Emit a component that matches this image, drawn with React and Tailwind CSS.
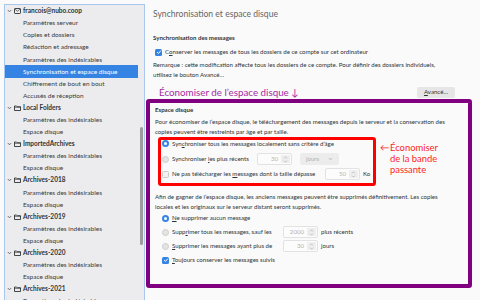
import React from "react";

const font = { fontFamily: "Lato, 'Open Sans', sans-serif" };

// tree rows of the account settings sidebar
const tree = [
  { label: "francois@nubo.coop", head: true, icon: "mail" },
  { label: "Paramètres serveur" },
  { label: "Copies et dossiers" },
  { label: "Rédaction et adressage" },
  { label: "Paramètres des indésirables" },
  { label: "Synchronisation et espace disque", selected: true },
  { label: "Chiffrement de bout en bout" },
  { label: "Accusés de réception" },
  { label: "Local Folders", head: true },
  { label: "Paramètres des indésirables" },
  { label: "Espace disque" },
  { label: "ImportedArchives", head: true },
  { label: "Paramètres des indésirables" },
  { label: "Espace disque" },
  { label: "Archives-2018", head: true },
  { label: "Paramètres des indésirables" },
  { label: "Espace disque" },
  { label: "Archives-2019", head: true },
  { label: "Paramètres des indésirables" },
  { label: "Espace disque" },
  { label: "Archives-2020", head: true },
  { label: "Paramètres des indésirables" },
  { label: "Espace disque" },
  { label: "Archives-2021", head: true },
  { label: "Paramètres des indésirables" },
];

function Chevron() {
  return (
    <svg width="5" height="4" viewBox="0 0 5 4" className="shrink-0">
      <polyline points="0.8,1 2.5,2.8 4.2,1" fill="none" stroke="#555" strokeWidth="0.8" />
    </svg>
  );
}

function HeadIcon({ kind }) {
  if (kind === "mail") {
    return (
      <svg width="7" height="6" viewBox="0 0 7 6" className="shrink-0">
        <rect x="0.5" y="0.5" width="6" height="5" rx="0.6" fill="none" stroke="#2e3436" strokeWidth="0.9" />
        <polyline points="0.8,1 3.5,3.2 6.2,1" fill="none" stroke="#2e3436" strokeWidth="0.7" />
      </svg>
    );
  }
  return (
    <svg width="7" height="6" viewBox="0 0 7 6" className="shrink-0">
      <path d="M0.5 1 H2.6 L3.2 1.7 H6.5 V5.5 H0.5 Z" fill="none" stroke="#2e3436" strokeWidth="0.9" />
      <line x1="0.5" y1="2.4" x2="6.5" y2="2.4" stroke="#2e3436" strokeWidth="0.6" />
    </svg>
  );
}

function Sidebar() {
  return (
    <div className="w-[145px] shrink-0 pl-[4px] pt-[4px] h-full">
      <div className="h-[300px] flex border border-[#a8c7ee] bg-[#ececee] overflow-hidden">
        <div className="flex-1 flex flex-col">
          {tree.map((row, i) =>
            row.head ? (
              <div key={i} className="h-[12.1px] shrink-0 flex items-center pl-[2px] gap-[2px]">
                <Chevron />
                <HeadIcon kind={row.icon} />
                <span className="font-bold text-[6.5px] text-[#2e3436] whitespace-nowrap">{row.label}</span>
              </div>
            ) : (
              <div
                key={i}
                className={`h-[12.1px] shrink-0 flex items-center pl-[18px] text-[6.5px] whitespace-nowrap ${
                  row.selected ? "bg-[#3584e4] text-white" : "text-[#3a3a3a]"
                }`}
              >
                {row.label}
              </div>
            )
          )}
        </div>
        <div className="w-[6px] shrink-0 flex justify-center">
          <div className="w-[3px] h-[118px] mt-[122px] rounded-full bg-[#9c9c9c]" />
        </div>
      </div>
    </div>
  );
}

function Check() {
  return (
    <span className="w-[7px] h-[7px] shrink-0 rounded-[1.5px] bg-[#3584e4] flex items-center justify-center">
      <svg width="6" height="6" viewBox="0 0 6 6">
        <polyline points="1.1,3.1 2.5,4.4 4.9,1.6" fill="none" stroke="white" strokeWidth="1" />
      </svg>
    </span>
  );
}

function EmptyCheck() {
  return <span className="w-[7px] h-[7px] shrink-0 rounded-[1.5px] bg-[#f2f2f2] border border-[#c9c9c9]" />;
}

function Radio({ on }) {
  return on ? (
    <span className="w-[7px] h-[7px] shrink-0 rounded-full bg-[#3584e4] flex items-center justify-center">
      <span className="w-[3px] h-[3px] rounded-full bg-white" />
    </span>
  ) : (
    <span className="w-[7px] h-[7px] shrink-0 rounded-full bg-[#e4e4e4] border border-[#cdcdcd]" />
  );
}

function Spin({ value }) {
  return (
    <div className="w-[35px] h-[12px] shrink-0 flex rounded-[2px] border border-[#e2e2e2] bg-[#fcfcfc]">
      <div className="flex-1 flex items-center justify-end pr-[3px] text-[#b4b4b4]">{value}</div>
      <div className="w-[9px] my-[1px] mr-[1px] rounded-[1px] bg-[#eeeeee] flex flex-col items-center justify-center gap-[1px]">
        <svg width="5" height="3" viewBox="0 0 5 3">
          <polyline points="1,2.4 2.5,0.8 4,2.4" fill="none" stroke="#b0b0b0" strokeWidth="0.7" />
        </svg>
        <svg width="5" height="3" viewBox="0 0 5 3">
          <polyline points="1,0.6 2.5,2.2 4,0.6" fill="none" stroke="#b0b0b0" strokeWidth="0.7" />
        </svg>
      </div>
    </div>
  );
}

function Content() {
  return (
    <div className="flex-1 flex flex-col pl-[8px] text-[6.1px] text-[#2e3436] whitespace-nowrap">
      <div className="h-[28px] flex items-center text-[8.6px] text-[#666]">Synchronisation et espace disque</div>
      <div className="h-[19px] flex items-center font-bold">Synchronisation des messages</div>
      <div className="h-[10px] flex items-center gap-[3px] pl-[2px]">
        <Check />
        <span>
          C<u>o</u>nserver les messages de tous les dossiers de ce compte sur cet ordinateur
        </span>
      </div>
      <div className="mt-[3px] leading-[10px]">
        Remarque : cette modification affecte tous les dossiers de ce compte. Pour définir des dossiers individuels,
        <br />
        utilisez le bouton Avancé…
      </div>
      <div className="mt-[6px] h-[12px] flex items-center justify-between pl-[6px] pr-[25px]">
        <span className="text-[9.8px] text-[#a52aa5]">Économiser de l’espace disque ↓</span>
        <span className="w-[38px] h-[11px] rounded-[2px] bg-[#e6e6e6] flex items-center justify-center">
          <span>
            <u>A</u>vancé…
          </span>
        </span>
      </div>

      <div className="mt-[1px] -ml-[7px] w-[326px] h-[189px] border-[4px] border-[#800080] rounded-[3px] pl-[5px] flex flex-col">
        <div className="h-[14px] flex items-center font-bold">Espace disque</div>
        <div className="leading-[10px]">
          Pour économiser de l’espace disque, le téléchargement des messages depuis le serveur et la conservation des
          <br />
          copies peuvent être restreints par âge et par taille.
        </div>
        <div className="flex">
          <div className="ml-[3px] w-[218px] h-[49px] border-[3px] border-[#ff0000] rounded-[3px] flex flex-col pl-[1px]">
            <div className="h-[7px] flex items-center gap-[3px]">
              <Radio on />
              <span>
                Syn<u>c</u>hroniser tous les messages localement sans critère d’âge
              </span>
            </div>
            <div className="mt-[5px] h-[14px] flex items-center gap-[3px]">
              <Radio />
              <span className="w-[82px]">
                Synchroniser <u>l</u>es plus récents
              </span>
              <Spin value="30" />
              <div className="ml-[5px] w-[39px] h-[12px] rounded-[2px] bg-[#ececec] flex items-center justify-between px-[6px] text-[#b0b0b0]">
                <span>jours</span>
                <svg width="5" height="4" viewBox="0 0 5 4">
                  <polyline points="0.8,1 2.5,2.8 4.2,1" fill="none" stroke="#b0b0b0" strokeWidth="0.8" />
                </svg>
              </div>
            </div>
            <div className="mt-[1px] h-[14px] flex items-center gap-[3px]">
              <EmptyCheck />
              <span className="w-[150px]">
                Ne pas télécharger les <u>m</u>essages dont la taille dépasse
              </span>
              <Spin value="50" />
              <span>Ko</span>
            </div>
          </div>
          <div className="ml-[4px] mt-[5px] flex text-[9.4px] leading-[11px] text-[#ff1f1f]">
            <span className="w-[10px]">←</span>
            <span>
              Économiser
              <br />
              de la bande
              <br />
              passante
            </span>
          </div>
        </div>
        <div className="mt-[6px] leading-[10px]">
          Afin de gagner de l’espace disque, les anciens messages peuvent être supprimés définitivement. Les copies
          <br />
          locales et les originaux sur le serveur distant seront supprimés.
        </div>
        <div className="-mt-[1px] pl-[7px] flex flex-col">
          <div className="h-[14px] flex items-center gap-[3px]">
            <Radio on />
            <span>
              <u>N</u>e supprimer aucun message
            </span>
          </div>
          <div className="h-[14px] flex items-center gap-[3px]">
            <Radio />
            <span className="w-[108px]">
              Supp<u>r</u>imer tous les messages, sauf les
            </span>
            <Spin value="2000" />
            <span>plus récents</span>
          </div>
          <div className="h-[14px] flex items-center gap-[3px]">
            <Radio />
            <span className="w-[108px]">
              <u>S</u>upprimer les messages ayant plus de
            </span>
            <Spin value="30" />
            <span>jours</span>
          </div>
          <div className="h-[14px] flex items-center gap-[3px]">
            <Check />
            <span>
              <u>T</u>oujours conserver les messages suivis
            </span>
          </div>
        </div>
      </div>
    </div>
  );
}

export default function App() {
  return (
    <div className="w-[480px] h-[300px] overflow-hidden flex bg-[#fafafa]" style={font}>
      <Sidebar />
      <Content />
    </div>
  );
}
